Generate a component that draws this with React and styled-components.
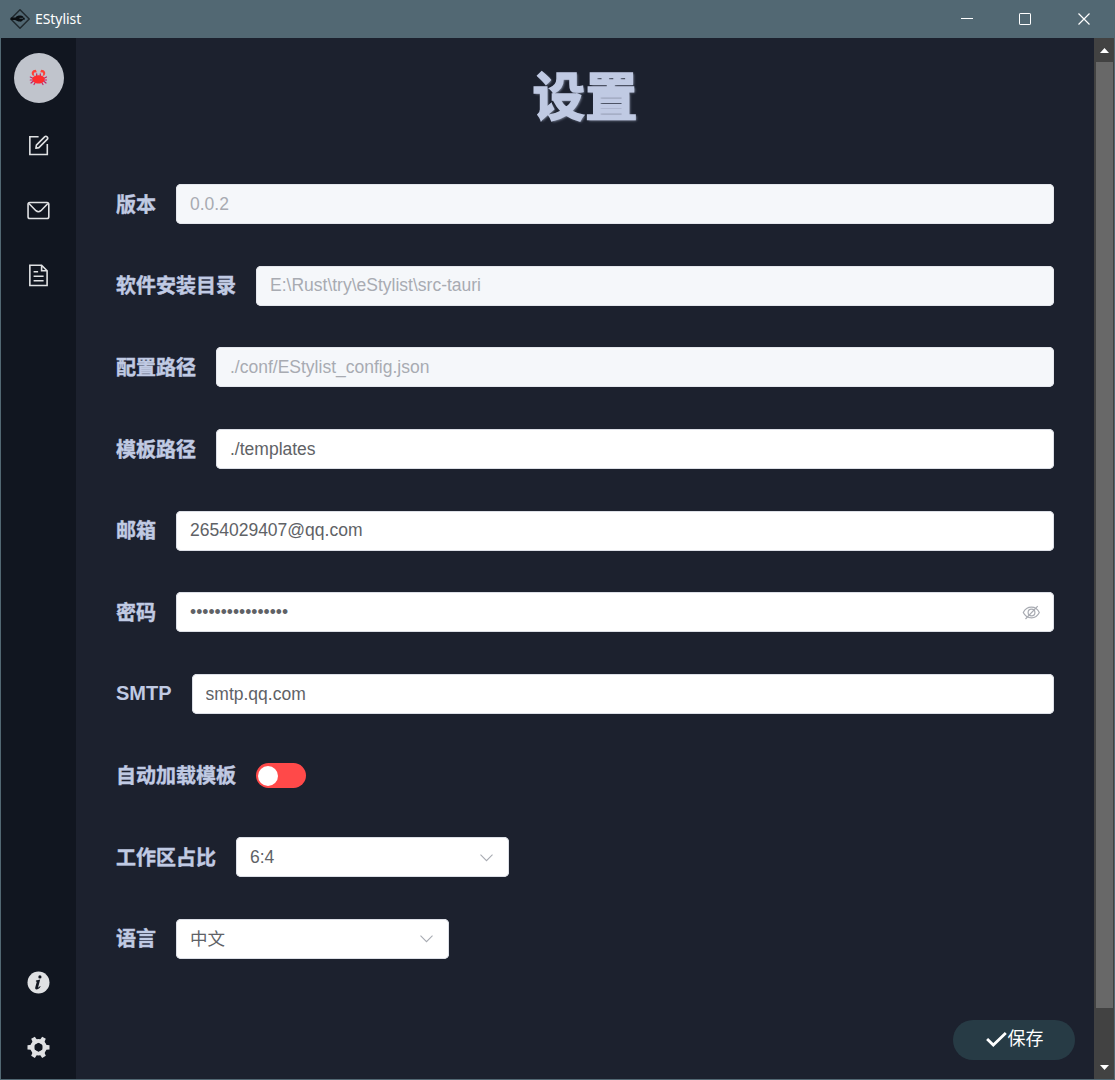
import React, { useState } from "react";
import styled, { createGlobalStyle } from "styled-components";

const sans = `"Liberation Sans", "Noto Sans CJK SC", sans-serif`;

const GlobalStyle = createGlobalStyle`
  *, *::before, *::after { box-sizing: border-box; }
  html, body { margin: 0; padding: 0; background: #1c212e; overflow: hidden; }
`;

const Window = styled.div`
  display: flex;
  flex-direction: column;
  width: 1115px;
  height: 1080px;
  overflow: hidden;
  background: #526873;
  font-family: ${sans};
`;

const TitleBar = styled.header`
  display: flex;
  flex: none;
  align-items: center;
  height: 38px;
  padding-left: 10px;
  background: #526873;
  color: #fff;
`;

const AppName = styled.span`
  flex: 1;
  margin-left: 5px;
  font: 14px/20px "Noto Sans", "Open Sans", sans-serif;
  letter-spacing: -0.05px;
`;

const WindowButton = styled.button`
  display: grid;
  place-items: center;
  width: ${(p) => p.$width}px;
  height: 38px;
  padding: 0;
  border: 0;
  background: none;
  color: #fff;
`;

const Body = styled.div`
  display: flex;
  flex: 1;
  min-height: 0;
  margin: 0 1px 1px;
`;

const Sidebar = styled.nav`
  display: flex;
  flex: none;
  flex-direction: column;
  align-items: center;
  width: 75px;
  padding-top: 15px;
  background: #111620;
  color: #e0e1e3;
`;

const Avatar = styled.div`
  display: grid;
  place-items: center;
  width: 50px;
  height: 50px;
  margin-bottom: 10px;
  padding: 0 1px 1px 0;
  border-radius: 50%;
  background: #c0c4cc;
`;

const NavItem = styled.button`
  display: grid;
  place-items: center;
  width: 75px;
  height: 65px;
  padding: 0 1px 1px 0;
  border: 0;
  background: none;
  color: inherit;
`;

const NavBottom = styled.div`
  margin-top: auto;
`;

const Content = styled.main`
  display: flex;
  flex: 1;
  flex-direction: column;
  min-width: 0;
  background: #1c212e;
`;

const Title = styled.h1`
  margin: 20px 0 47px;
  color: #c0cae3;
  font-size: 52.5px;
  line-height: 79px;
  font-weight: 700;
  text-align: center;
  -webkit-text-stroke: 1.6px #c0cae3;
  text-shadow: 1.25px 1.25px 2.5px #8f98ae;
`;

const Form = styled.form`
  display: flex;
  flex-direction: column;
  gap: 41.67px;
  padding: 0 40px;
`;

const Row = styled.div`
  display: flex;
  align-items: center;
  gap: 20px;
  height: 40px;
`;

const Label = styled.label`
  flex: none;
  height: 40px;
  padding-top: ${(p) => (p.$latin ? 0 : 0.55)}px;
  color: #c0cae3;
  font-size: 20px;
  line-height: ${(p) => (p.$latin ? 38 : 40)}px;
  font-weight: 700;
  white-space: nowrap;
  -webkit-text-stroke: ${(p) => (p.$latin ? 0 : 0.4)}px #c0cae3;
`;

const Field = styled.div`
  display: flex;
  flex: ${(p) => (p.$width ? "none" : "1")};
  align-items: center;
  width: ${(p) => (p.$width ? `${p.$width}px` : "auto")};
  min-width: 0;
  height: 40px;
  padding: 0 14px;
  border-radius: 5px;
  background: ${(p) => (p.$disabled ? "#f5f7fa" : "#fff")};
  box-shadow: inset 0 0 0 1px ${(p) => (p.$disabled ? "#e4e7ed" : "#dcdfe6")};
`;

const Input = styled.input`
  flex: 1;
  min-width: 0;
  height: 38px;
  padding: 0;
  margin-bottom: 0.6px;
  border: 0;
  outline: 0;
  background: none;
  color: #606266;
  font: 17.5px/38px ${sans};
  &:disabled { color: #a8abb2; }
`;

const SelectValue = styled.span`
  flex: 1;
  color: #606266;
  font-size: 17.5px;
  line-height: 38px;
`;

const Switch = styled.button`
  display: flex;
  align-items: center;
  justify-content: ${(p) => (p.$on ? "flex-end" : "flex-start")};
  width: 50px;
  height: 25px;
  padding: 0 2px;
  border: 0;
  border-radius: 13px;
  background: ${(p) => (p.$on ? "#13ce66" : "#ff4949")};
`;

const Knob = styled.span`
  width: 20px;
  height: 20px;
  border-radius: 50%;
  background: #fff;
`;

const SaveButton = styled.button`
  display: flex;
  align-items: center;
  justify-content: center;
  align-self: flex-end;
  width: 122px;
  height: 40px;
  margin: auto 19px 19px 0;
  padding: 0 0 2px 1px;
  border: 0;
  border-radius: 20px;
  background: #273b45;
  color: #fff;
  font: 18px/36px ${sans};
`;

const ScrollTrack = styled.div`
  display: flex;
  flex: none;
  flex-direction: column;
  align-items: center;
  width: 20px;
  background: #424242;
`;

const ScrollArrow = styled.div`
  display: grid;
  place-items: center;
  flex: none;
  height: 24px;
  margin-top: ${(p) => (p.$end ? "auto" : "0")};
  padding-left: 1px;
`;

const Thumb = styled.div`
  width: 17px;
  height: 946px;
  margin-left: 1px;
  background: #686868;
`;

const Logo = () => (
  <svg width="20" height="20" viewBox="0 0 20 20" fill="none">
    <path d="M10 .8 19.2 10 10 19.2.8 10Z" stroke="#20292e" strokeWidth="1.5" />
    <path d="M.8 8.600H5.500C6.500 7 8.500 6.500 10.500 6.600c2 .1 3 1 3 2.200h1.200v2H13c-.5 1.300-1.500 2-3.300 1.800C8 12.500 6.500 11.800 5 11H.8Z" fill="#0b0f12" />
    <path d="M9.500 9.300h3.500" stroke="#526873" strokeWidth=".8" />
  </svg>
);

const Crab = () => (
  <svg width="18" height="17" viewBox="-.5 0 18 17">
    <g stroke="#c92063" strokeWidth="1.2" fill="none" strokeLinecap="round">
      <path d="M4 9.500.8 8M4 11H.8M4 12l-2.500 2M6 13l-1.500 2.500M14 9.500 17 8M14 11h3M14 12l2.500 2M12 13l1.500 2.500" />
      <path d="M7.200 7V4.800M10.800 7V4.800" />
    </g>
    <path d="M3.400 6.800C1 4.500 2.500.8 6.300.8L7.300 3.300 4.800 3.400 4.200 5 5 6.800ZM14.600 6.800C17 4.500 15.500.8 11.700.8l-1 2.500 2.500.1.600 1.600L13 6.800Z" fill="#ff4038" />
    <path d="M3 9.200C4 5.300 14 5.300 15 9.200c.5 3-2.500 5.300-6 5.300S2.500 12.200 3 9.200Z" fill="#ff2d2d" />
  </svg>
);

const EditIcon = () => (
  <svg width="22" height="22" viewBox="-.6 -.5 22 22" fill="none" stroke="currentColor" strokeWidth="1.6">
    <path d="M11 2.250H2.250V20H19.700V9.500" />
    <path d="m8.300 13.800.5-3.200 8.200-8.200a1.750 1.750 0 0 1 2.500 2.500l-8.200 8.200Z" strokeLinejoin="round" />
  </svg>
);

const MailIcon = () => (
  <svg width="24" height="22" viewBox="-.3 -.5 24 22" fill="none" stroke="currentColor" strokeWidth="1.6">
    <rect x="1.75" y="3" width="20.75" height="16" rx="1.8" />
    <path d="m2.600 4 7 7.200c1.800 1.500 3.200 1.500 5 0l7-7.200" />
  </svg>
);

const DocumentIcon = () => (
  <svg width="22" height="24" viewBox="-.6 -.5 22 24" fill="none" stroke="currentColor" strokeWidth="1.6">
    <path d="M2.250 1.750H14L19.500 7.250v14.750H2.250ZM14 1.750V7.250h5.500" />
    <path d="M6 8.250h4.500M6 12.750h10M6 17.250h10" />
  </svg>
);

const InfoIcon = () => (
  <svg width="24" height="24" viewBox="-.5 -.5 24 24" overflow="visible">
    <circle cx="12" cy="13" r="11" fill="currentColor" />
    <circle cx="13.4" cy="7.4" r="1.6" fill="#111620" />
    <path d="M9.500 11.100c1.500-.2 2.800-.6 4.200-1l-2 7.300c-.2.900.6.800 1.900-.8l.5.400c-1.400 2.200-2.800 3-4.100 3-1.300-.1-1.500-1-1.200-2.200l1.300-4.700c.2-.9 0-1.300-.8-1.400Z" fill="#111620" />
  </svg>
);

const GearIcon = () => (
  <svg width="24" height="24" viewBox="-.5 -.8 24 24" fill="currentColor">
    {[0, 60, 120, 180, 240, 300].map((a) => (
      <path key={a} d="M19 10 23 10.400v4.200L19 15h-3v-5Z" transform={`rotate(${a} 12 12.5)`} />
    ))}
    <path fillRule="evenodd" d="M12 4.200a8.300 8.300 0 1 0 0 16.600 8.300 8.300 0 0 0 0-16.600Zm0 3.700a4.600 4.600 0 1 1 0 9.200 4.600 4.600 0 0 1 0-9.200Z" />
  </svg>
);

const HiddenEye = () => (
  <svg width="18" height="18" viewBox="-.5 0 18 18" fill="none" stroke="#a8abb2" strokeWidth="1.2">
    <path d="M.8 9.500C2.600 5.800 5.500 4.200 9 4.200S15 5.800 16.800 9.500C15 13.200 12.500 14.800 9 14.800S2.600 13.200.8 9.500Z" />
    <circle cx="9" cy="9.5" r="3.4" />
    <path d="M3 16 15.200 3.100" />
  </svg>
);

const Chevron = () => (
  <svg width="17" height="17" viewBox="0 0 17 17" fill="none" stroke="#a8abb2" strokeWidth="1.1">
    <path d="m2.500 5.700 6 6 6-6" />
  </svg>
);

const CheckIcon = () => (
  <svg width="22" height="18" viewBox="0.7 0 22 18" fill="none" stroke="currentColor" strokeWidth="2.8">
    <path d="m1.800 9 6.200 6L20.500 3" />
  </svg>
);

const textFields = [
  { label: "版本", value: "0.0.2", disabled: true },
  { label: "软件安装目录", value: "E:\\Rust\\try\\eStylist\\src-tauri", disabled: true },
  { label: "配置路径", value: "./conf/EStylist_config.json", disabled: true },
  { label: "模板路径", value: "./templates" },
  { label: "邮箱", value: "2654029407@qq.com" },
  { label: "密码", value: "abcdefghijklmnop", type: "password" },
  { label: "SMTP", value: "smtp.qq.com", latin: true },
];

function TextRow({ label, value, disabled, latin, type = "text" }) {
  return (
    <Row>
      <Label $latin={latin}>{label}</Label>
      <Field $disabled={disabled}>
        <Input type={type} defaultValue={value} disabled={disabled} aria-label={label} />
        {type === "password" && <HiddenEye />}
      </Field>
    </Row>
  );
}

function SelectRow({ label, value }) {
  return (
    <Row>
      <Label>{label}</Label>
      <Field $width={273}>
        <SelectValue>{value}</SelectValue>
        <Chevron />
      </Field>
    </Row>
  );
}

export default function App() {
  const [autoLoad, setAutoLoad] = useState(false);
  return (
    <Window>
      <GlobalStyle />
      <TitleBar>
        <Logo />
        <AppName>EStylist</AppName>
        <WindowButton $width={58}>
          <svg width="12" height="12" stroke="currentColor"><path d="M0 5.500h12" /></svg>
        </WindowButton>
        <WindowButton $width={58}>
          <svg width="12" height="12" fill="none" stroke="currentColor"><rect x=".5" y=".5" width="11" height="11" rx=".6" /></svg>
        </WindowButton>
        <WindowButton $width={61}>
          <svg width="14" height="12" stroke="currentColor" strokeWidth="1.2"><path d="m.5.5 11 11m0-11-11 11" /></svg>
        </WindowButton>
      </TitleBar>
      <Body>
        <Sidebar>
          <Avatar><Crab /></Avatar>
          <NavItem><EditIcon /></NavItem>
          <NavItem><MailIcon /></NavItem>
          <NavItem><DocumentIcon /></NavItem>
          <NavBottom>
            <NavItem><InfoIcon /></NavItem>
            <NavItem><GearIcon /></NavItem>
          </NavBottom>
        </Sidebar>
        <Content>
          <Title>设置</Title>
          <Form>
            {textFields.map((f) => <TextRow key={f.label} {...f} />)}
            <Row>
              <Label>自动加载模板</Label>
              <Switch type="button" $on={autoLoad} onClick={() => setAutoLoad(!autoLoad)}><Knob /></Switch>
            </Row>
            <SelectRow label="工作区占比" value="6:4" />
            <SelectRow label="语言" value="中文" />
          </Form>
          <SaveButton><CheckIcon />保存</SaveButton>
        </Content>
        <ScrollTrack>
          <ScrollArrow><svg width="9" height="5" fill="#fff"><path d="M4.500 0 9 5H0Z" /></svg></ScrollArrow>
          <Thumb />
          <ScrollArrow $end><svg width="9" height="5" fill="#fff"><path d="M0 0h9L4.500 5Z" /></svg></ScrollArrow>
        </ScrollTrack>
      </Body>
    </Window>
  );
}
